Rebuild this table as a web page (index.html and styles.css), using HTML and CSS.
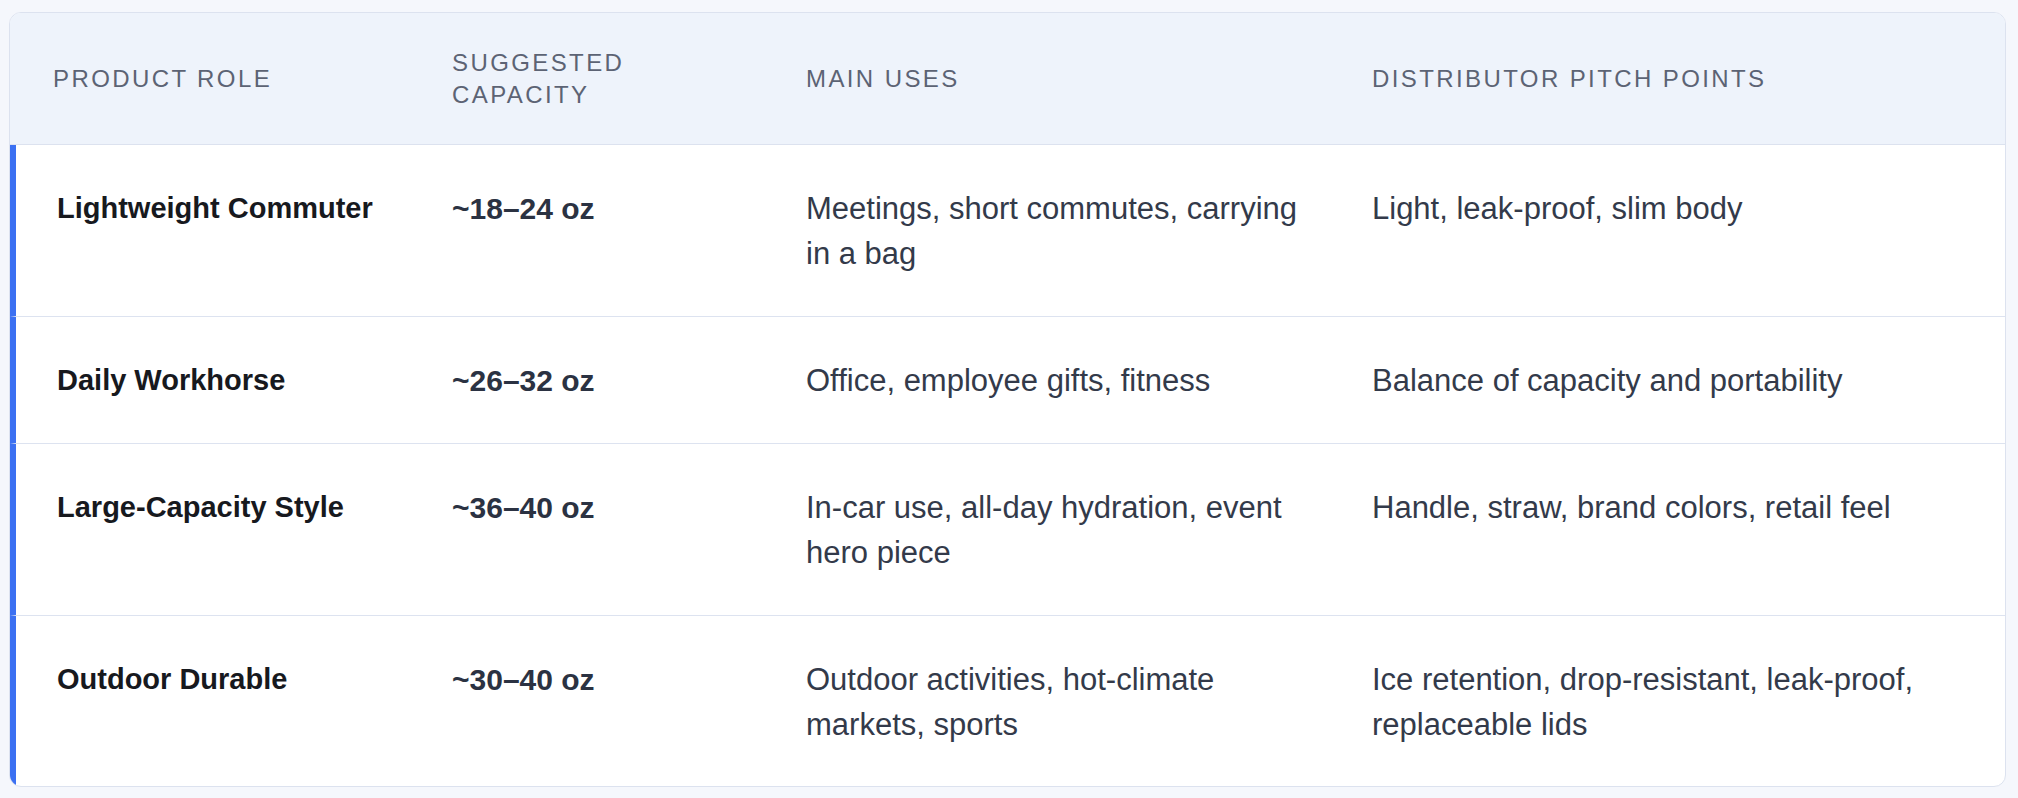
FILE: index.html
```html
<!DOCTYPE html>
<html lang="en">
<head>
<meta charset="utf-8">
<title>Product Roles</title>
<link rel="stylesheet" href="styles.css">
</head>
<body>
<div class="card">
  <table class="roles">
    <colgroup>
      <col class="c-role">
      <col class="c-cap">
      <col class="c-uses">
      <col class="c-pitch">
    </colgroup>
    <thead>
      <tr>
        <th>Product Role</th>
        <th>Suggested Capacity</th>
        <th>Main Uses</th>
        <th>Distributor Pitch Points</th>
      </tr>
    </thead>
    <tbody>
      <tr>
        <td class="role">Lightweight Commuter</td>
        <td class="cap">~18–24 oz</td>
        <td>Meetings, short commutes, carrying in a bag</td>
        <td>Light, leak-proof, slim body</td>
      </tr>
      <tr>
        <td class="role">Daily Workhorse</td>
        <td class="cap">~26–32 oz</td>
        <td>Office, employee gifts, fitness</td>
        <td>Balance of capacity and portability</td>
      </tr>
      <tr>
        <td class="role">Large-Capacity Style</td>
        <td class="cap">~36–40 oz</td>
        <td>In-car use, all-day hydration, event hero piece</td>
        <td>Handle, straw, brand colors, retail feel</td>
      </tr>
      <tr>
        <td class="role">Outdoor Durable</td>
        <td class="cap">~30–40 oz</td>
        <td>Outdoor activities, hot-climate markets, sports</td>
        <td>Ice retention, drop-resistant, leak-proof, replaceable lids</td>
      </tr>
    </tbody>
  </table>
</div>
</body>
</html>
```
FILE: styles.css
```css
html, body {
  margin: 0;
  background: #f5f7fc;
}

body {
  padding: 12px 12px 12px 9px;
  font-family: "Liberation Sans", Arial, sans-serif;
  color: #333a4a;
}

.card {
  background: #ffffff;
  border: 1px solid #dce2ef;
  border-radius: 12px;
  overflow: hidden;
}

.roles {
  width: 100%;
  table-layout: fixed;
  border-collapse: separate;
  border-spacing: 0;
}

.c-role { width: 399px; }
.c-cap { width: 354px; }
.c-uses { width: 566px; }
.c-pitch { width: 676px; }

.roles th {
  background: #eef3fb;
  color: #5c6374;
  font-weight: 400;
  font-size: 24px;
  line-height: 32px;
  letter-spacing: 0.1em;
  text-transform: uppercase;
  text-align: left;
  vertical-align: middle;
  padding: 34px 20px 33px 43px;
  border-bottom: 1px solid #dce2ef;
}

.roles td {
  font-size: 31px;
  line-height: 45px;
  text-align: left;
  vertical-align: top;
  padding: 41px 20px 40px 43px;
  border-bottom: 1px solid #dde3f0;
  color: #333a4a;
}

.roles tbody tr:last-child td {
  border-bottom: none;
  padding-bottom: 39px;
}

.roles td.role {
  border-left: 6px solid #3b70f2;
  padding-left: 41px;
  font-size: 29px;
  font-weight: 700;
  color: #17191e;
}

.roles td.cap {
  font-size: 30px;
  font-weight: 700;
  color: #2b3242;
}
```
